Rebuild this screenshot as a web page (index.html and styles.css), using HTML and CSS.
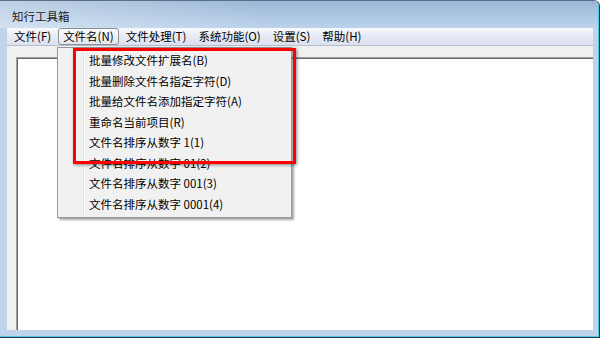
FILE: index.html
```html
<!DOCTYPE html>
<html lang="zh-CN">
<head>
    <meta charset="UTF-8">
    <title>知行工具箱</title>
    <link rel="stylesheet" href="styles.css">
</head>
<body>
    <div class="window">
        <div class="frame">
            <div class="titlebar">知行工具箱</div>

            <div class="menubar">
                <span class="menu-item">文件(F)</span>
                <span class="menu-item active">文件名(N)</span>
                <span class="menu-item">文件处理(T)</span>
                <span class="menu-item">系统功能(O)</span>
                <span class="menu-item">设置(S)</span>
                <span class="menu-item">帮助(H)</span>
            </div>

            <div class="client">
                <div class="edit-area"></div>
            </div>
        </div>

        <!-- dropdown for 文件名(N) -->
        <div class="dropdown">
            <div class="drop-item">批量修改文件扩展名(B)</div>
            <div class="drop-item">批量删除文件名指定字符(D)</div>
            <div class="drop-item">批量给文件名添加指定字符(A)</div>
            <div class="drop-item">重命名当前项目(R)</div>
            <div class="drop-item">文件名排序从数字 1(1)</div>
            <div class="drop-item">文件名排序从数字 01(2)</div>
            <div class="drop-item">文件名排序从数字 001(3)</div>
            <div class="drop-item">文件名排序从数字 0001(4)</div>
        </div>

        <div class="highlight-box"></div>
    </div>
</body>
</html>
```

FILE: styles.css
```css
html, body {
    margin: 0;
    padding: 0;
    width: 600px;
    height: 338px;
    overflow: hidden;
    background: #ffffff;
}

body {
    font-family: "Noto Sans CJK SC", "Microsoft YaHei", sans-serif;
    font-size: 11.5px;
    color: #000;
}

.window {
    position: relative;
    width: 600px;
    height: 338px;
    box-sizing: border-box;
    border-top: 1px solid #5a6f86;
    border-right: 1px solid #2a3a4c;
    border-bottom: 1px solid #2a3a4c;
    border-top-right-radius: 6px;
    overflow: hidden;
    background: #bfd4eb;
}

.frame {
    height: 100%;
    box-sizing: border-box;
    display: flex;
    flex-direction: column;
    border-right: 1px solid #4cc8e4;
    border-bottom: 1px solid #4cc8e4;
    padding: 0 5px 6px 7px;
}

.titlebar {
    height: 27px;
    margin: 0 -5px 0 -7px;
    padding-left: 12px;
    line-height: 30px;
    font-size: 11.5px;
    color: #1e1e1e;
    background:
        linear-gradient(to right, rgba(255, 255, 255, 0.35), rgba(255, 255, 255, 0) 45%),
        linear-gradient(to bottom, #9ab7d6, #bcd3ec);
}

.menubar {
    height: 17px;
    display: flex;
    align-items: center;
    border-bottom: 1px solid #b6bdcc;
    background: linear-gradient(to bottom, #fafbfd 0%, #e8ecf6 40%, #dbe1ef 100%);
}

.menu-item {
    height: 17px;
    line-height: 17px;
    padding: 0 5px;
    margin-right: 2px;
    box-sizing: border-box;
    white-space: nowrap;
}

.menu-item:first-child {
    padding-left: 7px;
}

.menu-item.active {
    border: 1px solid #8a8f99;
    border-radius: 3px;
    line-height: 15px;
    padding: 0 4px;
    background: linear-gradient(to bottom, #fbfbfc, #e4e6ea);
}

.client {
    flex: 1;
    background: #f0f0f0;
    padding: 11px 0 0 9px;
    display: flex;
}

.edit-area {
    flex: 1;
    background: #ffffff;
    border-top: 1px solid #a0a0a0;
    border-left: 1px solid #a0a0a0;
    box-shadow: inset 1px 1px 0 #696969;
}

.dropdown {
    position: absolute;
    left: 57px;
    top: 46px;
    width: 235px;
    height: 171px;
    box-sizing: border-box;
    border: 1px solid #979797;
    background:
        linear-gradient(to right, transparent 25px, #e2e3e3 25px, #e2e3e3 26px, #ffffff 26px, #ffffff 27px, transparent 27px),
        #f1f1f1;
    box-shadow: 2px 2px 2px rgba(0, 0, 0, 0.35);
    padding-top: 2px;
}

.drop-item {
    height: 20.5px;
    line-height: 20.5px;
    padding-left: 31px;
    white-space: nowrap;
}

.highlight-box {
    position: absolute;
    left: 73px;
    top: 47px;
    width: 223px;
    height: 116px;
    box-sizing: border-box;
    border: 3px solid #ff0000;
    box-shadow: 1px 1px 3px rgba(0, 0, 0, 0.45);
}
```
